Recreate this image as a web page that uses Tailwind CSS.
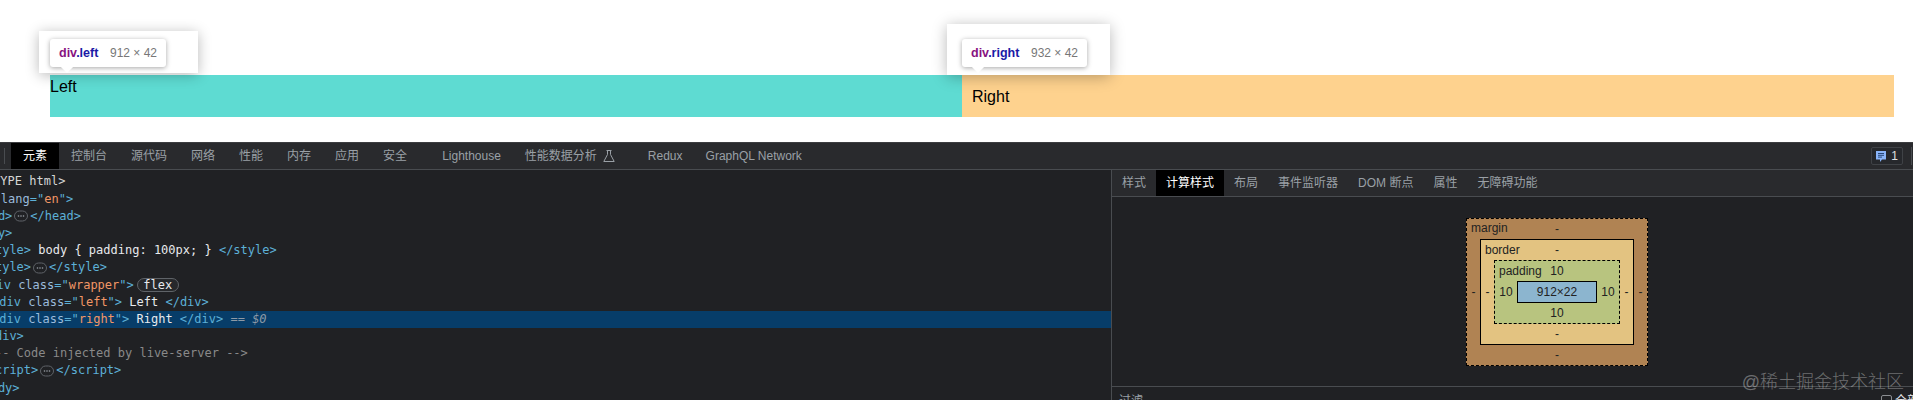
<!DOCTYPE html>
<html lang="zh-CN">
<head>
    <meta charset="UTF-8">
    <title>DevTools flex</title>
    <script src="https://cdn.jsdelivr.net/npm/@tailwindcss/browser@4"></script>
</head>
<body class="h-[400px] overflow-hidden bg-white font-['Liberation_Sans','Noto_Sans_CJK_SC',sans-serif]">
    <!-- 页面区域 -->
    <div class="relative h-[142px] pt-[75px] pl-[50px]">
        <div class="flex text-[16px] leading-[22px] text-black">
            <div class="w-[912px] h-[42px] pt-px bg-[#5edbd2]">Left</div>
            <div class="w-[932px] h-[42px] pt-[11px] px-[10px] bg-[#fed28e]">Right</div>
        </div>

        <!-- 高亮提示 -->
        <div class="absolute left-[39px] top-[31px] w-[159px] h-[42px] bg-white shadow-[0_2px_14px_rgba(0,0,0,0.28)]"></div>
        <div class="absolute left-[50px] top-[39px] h-[28px] w-[116px] px-[9px] flex items-center justify-between rounded-[3px] bg-white text-[12px] shadow-[0_1px_5px_rgba(0,0,0,0.35)]">
            <span class="font-bold text-[12.5px]"><span class="text-[#881280]">div</span><span class="text-[#1a1aa6]">.left</span></span>
            <span class="text-[#777]">912 × 42</span>
            <div class="absolute left-[12px] top-[22px] w-[10px] h-[10px] rotate-45 bg-white"></div>
        </div>
        <div class="absolute left-[947px] top-[24px] w-[163px] h-[51px] bg-white shadow-[0_2px_14px_rgba(0,0,0,0.28)]"></div>
        <div class="absolute left-[962px] top-[39px] h-[28px] w-[125px] px-[9px] flex items-center justify-between rounded-[3px] bg-white text-[12px] shadow-[0_1px_5px_rgba(0,0,0,0.35)]">
            <span class="font-bold text-[12.5px]"><span class="text-[#881280]">div</span><span class="text-[#1a1aa6]">.right</span></span>
            <span class="text-[#777]">932 × 42</span>
            <div class="absolute left-[11px] top-[22px] w-[10px] h-[10px] rotate-45 bg-white"></div>
        </div>
    </div>

    <!-- DevTools -->
    <div class="h-[258px] bg-[#202124] text-[12px]">
        <!-- 顶部标签 -->
        <div class="flex items-stretch h-[28px] pl-[4px] bg-[#292a2d] border-t border-t-[#3c3d40] border-b border-b-[#494c50] text-[#9aa0a6]">
            <div class="w-px my-[5px] bg-[#494c50]"></div>
            <div class="ml-[6px] px-3 flex items-center bg-black text-white">元素</div>
            <div class="px-3 flex items-center">控制台</div>
            <div class="px-3 flex items-center">源代码</div>
            <div class="px-3 flex items-center">网络</div>
            <div class="px-3 flex items-center">性能</div>
            <div class="px-3 flex items-center">内存</div>
            <div class="px-3 flex items-center">应用</div>
            <div class="px-3 flex items-center">安全</div>
            <div class="w-[11px]"></div>
            <div class="px-3 flex items-center">Lighthouse</div>
            <div class="px-3 flex items-center gap-[5px]">性能数据分析
                <svg class="w-[14px] h-[14px]" viewBox="0 0 14 14" fill="none" stroke="#9aa0a6" stroke-width="1"><path d="M4.5 1.5h5M5.5 1.5v4L1.8 12.5h10.4L8.5 5.5v-4"/></svg>
            </div>
            <div class="w-[8px]"></div>
            <div class="pl-3 pr-[11px] flex items-center">Redux</div>
            <div class="px-3 flex items-center">GraphQL Network</div>
            <div class="ml-auto mr-[8px] my-[4px] w-[32px] flex items-center justify-center gap-[5px] rounded-[2px] border border-[#3f4246] bg-[#26282c] text-[#e0e0e0]">
                <svg class="w-[10px] h-[11px]" viewBox="0 0 10 11"><path d="M0 0h10v8.5H6L4 11V8.5H0z" fill="#8ab4f8"/><path d="M2 2.5h6M2 4.3h6M2 6.1h4" stroke="#1d3c6b" stroke-width="0.9"/></svg>
                <span>1</span>
            </div>
            <div class="w-px my-[4px] mr-px bg-[#494c50]"></div>
        </div>

        <div class="flex h-[230px]">
            <!-- 元素树 -->
            <div class="w-[1111px] pt-[3.4px] overflow-hidden font-['DejaVu_Sans_Mono','Liberation_Mono',monospace] leading-[17.2px] text-[#5db0d7] *:whitespace-pre *:h-[17.2px]">
                <div class="ml-[-43px] text-[#d5d5d5]">&lt;!DOCTYPE html&gt;</div>
                <div class="ml-[-42.5px]">&lt;html <span class="text-[#9bbbdc]">lang</span>="<span class="text-[#f29766]">en</span>"&gt;</div>
                <div class="ml-[-31px] flex items-center">&lt;head&gt;<svg class="mx-[2px] w-[14px] h-[12px]" viewBox="0 0 14 12" fill="none"><rect x="0.5" y="1" width="13" height="10" rx="5" stroke="#5f6368"/><circle cx="4.5" cy="6" r="0.8" fill="#9aa0a6"/><circle cx="7" cy="6" r="0.8" fill="#9aa0a6"/><circle cx="9.5" cy="6" r="0.8" fill="#9aa0a6"/></svg>&lt;/head&gt;</div>
                <div class="ml-[-31px]">&lt;body&gt;</div>
                <div class="ml-[-19.5px]">&lt;style&gt; <span class="text-[#e8eaed]">body { padding: 100px; }</span> &lt;/style&gt;</div>
                <div class="ml-[-19.5px] flex items-center">&lt;style&gt;<svg class="mx-[2px] w-[14px] h-[12px]" viewBox="0 0 14 12" fill="none"><rect x="0.5" y="1" width="13" height="10" rx="5" stroke="#5f6368"/><circle cx="4.5" cy="6" r="0.8" fill="#9aa0a6"/><circle cx="7" cy="6" r="0.8" fill="#9aa0a6"/><circle cx="9.5" cy="6" r="0.8" fill="#9aa0a6"/></svg>&lt;/style&gt;</div>
                <div class="ml-[-18px] flex items-center">&lt;div <span class="text-[#9bbbdc]">class</span>="<span class="text-[#f29766]">wrapper</span>"&gt;<span class="ml-[3px] w-[42px] h-[14px] rounded-[7px] border border-[#5f6368] bg-[#26282b] text-center leading-[12px] text-[#e8eaed]">flex</span></div>
                <div class="ml-[-8px]">&lt;div <span class="text-[#9bbbdc]">class</span>="<span class="text-[#f29766]">left</span>"&gt; <span class="text-[#e8eaed]">Left</span> &lt;/div&gt;</div>
                <div class="ml-[-8px] bg-[#073d69]">&lt;div <span class="text-[#9bbbdc]">class</span>="<span class="text-[#f29766]">right</span>"&gt; <span class="text-[#e8eaed]">Right</span> &lt;/div&gt; <span class="text-[#8e9aa6]">== <i>$0</i></span></div>
                <div class="ml-[-19.5px]">&lt;/div&gt;</div>
                <div class="ml-[-19.5px] text-[#898989]">&lt;!-- Code injected by live-server --&gt;</div>
                <div class="ml-[-19.5px] flex items-center">&lt;script&gt;<svg class="mx-[2px] w-[14px] h-[12px]" viewBox="0 0 14 12" fill="none"><rect x="0.5" y="1" width="13" height="10" rx="5" stroke="#5f6368"/><circle cx="4.5" cy="6" r="0.8" fill="#9aa0a6"/><circle cx="7" cy="6" r="0.8" fill="#9aa0a6"/><circle cx="9.5" cy="6" r="0.8" fill="#9aa0a6"/></svg>&lt;/script&gt;</div>
                <div class="ml-[-31px]">&lt;/body&gt;</div>
            </div>

            <!-- 右侧面板 -->
            <div class="relative flex-1 flex flex-col border-l border-[#494c50]">
                <div class="shrink-0 flex items-stretch h-[27px] bg-[#292a2d] border-b border-[#494c50] text-[#9aa0a6]">
                    <div class="px-[10px] flex items-center">样式</div>
                    <div class="px-[10px] flex items-center bg-black text-white">计算样式</div>
                    <div class="px-[10px] flex items-center">布局</div>
                    <div class="px-[10px] flex items-center">事件监听器</div>
                    <div class="px-[10px] flex items-center">DOM 断点</div>
                    <div class="px-[10px] flex items-center">属性</div>
                    <div class="px-[10px] flex items-center">无障碍功能</div>
                </div>

                <!-- 盒模型 -->
                <div class="shrink-0 h-[189px] pt-[21px] pl-[354px] text-[12px] leading-[14px] text-[#222]">
                    <div class="relative w-[182px] h-[148px] border border-dashed border-black bg-[#b08353] flex flex-col">
                        <span class="absolute left-[4px] top-[2px]">margin</span>
                        <div class="h-[20px] flex items-center justify-center">-</div>
                        <div class="flex items-center flex-1">
                            <div class="w-[13px] text-center">-</div>
                            <div class="relative w-[154px] h-[106px] border border-black bg-[#e3c381] flex flex-col">
                                <span class="absolute left-[4px] top-[3px]">border</span>
                                <div class="h-[20px] flex items-center justify-center">-</div>
                                <div class="flex items-center flex-1">
                                    <div class="w-[13px] text-center">-</div>
                                    <div class="relative w-[126px] h-[64px] border border-dashed border-black bg-[#b8c47f] flex flex-col">
                                        <span class="absolute left-[4px] top-[3px]">padding</span>
                                        <div class="h-[20px] flex items-center justify-center">10</div>
                                        <div class="flex items-center flex-1">
                                            <div class="w-[22px] text-center">10</div>
                                            <div class="w-[80px] h-[22px] border border-black bg-[#8cb5cf] flex items-center justify-center">912×22</div>
                                            <div class="w-[22px] text-center">10</div>
                                        </div>
                                        <div class="h-[20px] flex items-center justify-center">10</div>
                                    </div>
                                    <div class="w-[13px] text-center">-</div>
                                </div>
                                <div class="h-[20px] flex items-center justify-center">-</div>
                            </div>
                            <div class="w-[13px] text-center">-</div>
                        </div>
                        <div class="h-[20px] flex items-center justify-center">-</div>
                    </div>
                </div>

                <!-- 过滤 -->
                <div class="shrink-0 flex items-start h-[14px] overflow-hidden pl-[7px] pt-[5px] border-t border-[#494c50] text-[#9aa0a6]">
                    <span>过滤</span>
                    <span class="ml-auto mt-[3px] w-[11px] h-[11px] rounded-[2px] border border-[#8a8d91]"></span>
                    <span class="ml-[3px] mr-[-6px] text-[#e8eaed] whitespace-nowrap">全部</span>
                </div>

                <!-- 水印 -->
                <div class="absolute right-[9px] bottom-[7px] text-[18px] leading-[22px] font-light text-white/35 whitespace-nowrap">@稀土掘金技术社区</div>
            </div>
        </div>
    </div>
</body>
</html>
